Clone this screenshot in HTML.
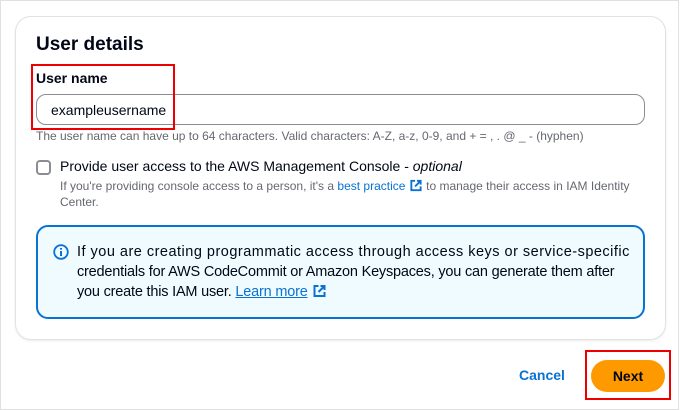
<!DOCTYPE html>
<html><head><meta charset="utf-8"><style>
*{box-sizing:border-box;margin:0;padding:0}
body{width:680px;height:405px;background:#fff;font-family:"Liberation Sans",sans-serif;color:#000716;position:relative;overflow:hidden}
.frame{position:absolute;left:0;top:0;width:679px;height:410px;border:1px solid #e0e0e0}
.card{position:absolute;left:15px;top:16px;width:651px;height:324px;border:1px solid #e2e2e2;border-radius:16px;box-shadow:0 1px 2px rgba(0,0,0,.08)}
.abs{position:absolute;white-space:nowrap}
.lbl{font-size:14px;font-weight:bold;left:36px;top:70px}
.input{position:absolute;left:36px;top:94px;width:609px;height:31px;border:1px solid #8c8c94;border-radius:10px;font-size:14px;padding:7px 0 0 14px}
.hint{font-size:12px;color:#656871;left:36px;top:129px}
.cb{position:absolute;left:36px;top:160px;width:15px;height:15px;border:2px solid #8c8c94;border-radius:4px}
.cbl{font-size:14px;left:60px;top:158px}
.sub{font-size:12px;color:#656871;left:60px;top:178px;line-height:16px;white-space:normal;width:590px}
a{color:#0972d3;text-decoration:none}
.info{position:absolute;left:36px;top:225px;width:609px;height:94px;border:2px solid #0972d3;border-radius:12px;background:#f0fbff}
.itext{font-size:14.5px;left:39px;top:15px;line-height:20px}
.cancel{font-size:14px;font-weight:bold;color:#0972d3;left:519px;top:367px}
.next{position:absolute;left:591px;top:360px;width:74px;height:32px;background:#ff9900;border-radius:16px;font-size:14px;font-weight:bold;text-align:center;line-height:32px}
.red{position:absolute;border:2px solid #e00;}
</style></head><body>
<div class="frame"></div>
<div class="card"></div>
<div class="abs" style="left:36px;top:34px;font-size:19px;font-weight:bold">User details</div>
<div class="abs lbl">User name</div>
<div class="input">exampleusername</div>
<div class="abs hint">The user name can have up to 64 characters. Valid characters: A-Z, a-z, 0-9, and + = , . @ _ - (hyphen)</div>
<div class="cb"></div>
<div class="abs cbl">Provide user access to the AWS Management Console - <i>optional</i></div>
<div class="abs sub">If you're providing console access to a person, it's a <a>best practice <svg width="14" height="13" viewBox="0 0 14 14" style="vertical-align:-2px"><path d="M6 2H2v10h10V8M8 2h4v4M12 2L6 8" fill="none" stroke="#0972d3" stroke-width="2"/></svg></a> to manage their access in IAM Identity Center.</div>
<div class="info">
<svg class="abs" style="left:15px;top:17px" width="16" height="16" viewBox="0 0 16 16"><circle cx="8" cy="8" r="6.8" fill="none" stroke="#0972d3" stroke-width="1.8"/><path d="M8 7v5M8 4v1.6" stroke="#0972d3" stroke-width="2"/></svg>
<div class="abs itext"><span style="letter-spacing:0.49px">If you are creating programmatic access through access keys or service-specific</span><br><span style="letter-spacing:-0.2px">credentials for AWS CodeCommit or Amazon Keyspaces, you can generate them after</span><br><span style="letter-spacing:-0.2px">you create this IAM user. <a style="text-decoration:underline">Learn more</a></span> <svg width="15" height="14" viewBox="0 0 14 14" style="vertical-align:-2px"><path d="M6 2H2v10h10V8M8 2h4v4M12 2L6 8" fill="none" stroke="#0972d3" stroke-width="2"/></svg></div>
</div>
<div class="abs cancel">Cancel</div>
<div class="next">Next</div>
<div class="red" style="left:31px;top:64px;width:144px;height:66px"></div>
<div class="red" style="left:585px;top:350px;width:86px;height:50px"></div>
</body></html>
